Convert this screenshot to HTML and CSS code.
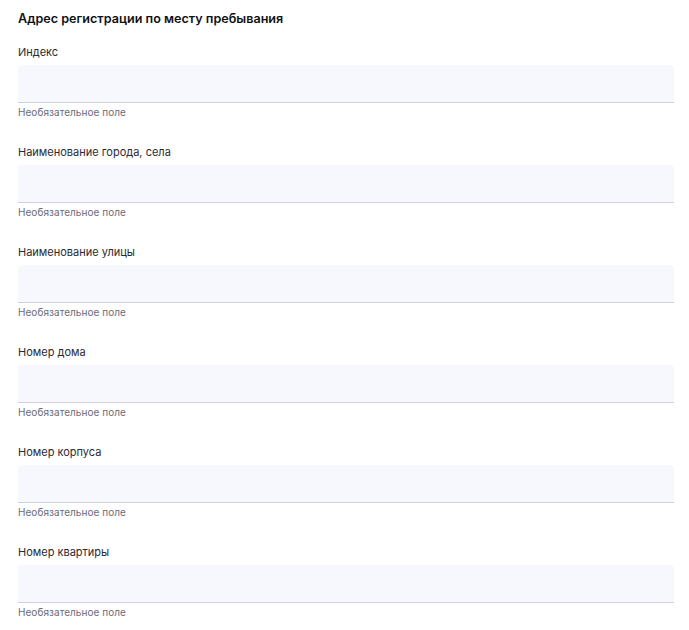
FILE: index.html
```html
<!DOCTYPE html>
<html lang="ru">
<head>
<meta charset="utf-8">
<title>Адрес регистрации</title>
<link rel="stylesheet" href="styles.css">
</head>
<body>
<form class="address">
  <h2 class="address__title">Адрес регистрации по месту пребывания</h2>
  <div class="field">
    <label class="field__label">Индекс</label>
    <input class="field__input" type="text">
    <span class="field__hint">Необязательное поле</span>
  </div>
  <div class="field">
    <label class="field__label">Наименование города, села</label>
    <input class="field__input" type="text">
    <span class="field__hint">Необязательное поле</span>
  </div>
  <div class="field">
    <label class="field__label">Наименование улицы</label>
    <input class="field__input" type="text">
    <span class="field__hint">Необязательное поле</span>
  </div>
  <div class="field">
    <label class="field__label">Номер дома</label>
    <input class="field__input" type="text">
    <span class="field__hint">Необязательное поле</span>
  </div>
  <div class="field">
    <label class="field__label">Номер корпуса</label>
    <input class="field__input" type="text">
    <span class="field__hint">Необязательное поле</span>
  </div>
  <div class="field">
    <label class="field__label">Номер квартиры</label>
    <input class="field__input" type="text">
    <span class="field__hint">Необязательное поле</span>
  </div>
</form>
</body>
</html>
```
FILE: styles.css
```css
* { box-sizing: border-box; }

html, body {
  margin: 0;
  background: #ffffff;
}

body {
  font-family: Inter, "Noto Sans", sans-serif;
  color: #1f1f24;
}

.address {
  display: flex;
  flex-direction: column;
  padding: 10px 15px 0 18px;
}

.address__title {
  margin: 0 0 16px;
  font-size: 12.6px;
  line-height: 18px;
  font-weight: 600;
  color: #111114;
}

.field {
  display: flex;
  flex-direction: column;
  height: 100px;
}

.field__label {
  font-size: 11px;
  line-height: 16px;
  color: #2a2a33;
  margin-bottom: 5px;
}

.field__input {
  display: block;
  width: 100%;
  height: 38px;
  border: 0;
  border-bottom: 1px solid #cfd0dc;
  border-radius: 4px 4px 0 0;
  background: #f7f8fd;
  outline: none;
  padding: 0 12px;
  font: inherit;
}

.field__hint {
  margin-top: 3px;
  font-size: 10px;
  line-height: 13px;
  letter-spacing: 0.05px;
  color: #6b6b78;
}
```
